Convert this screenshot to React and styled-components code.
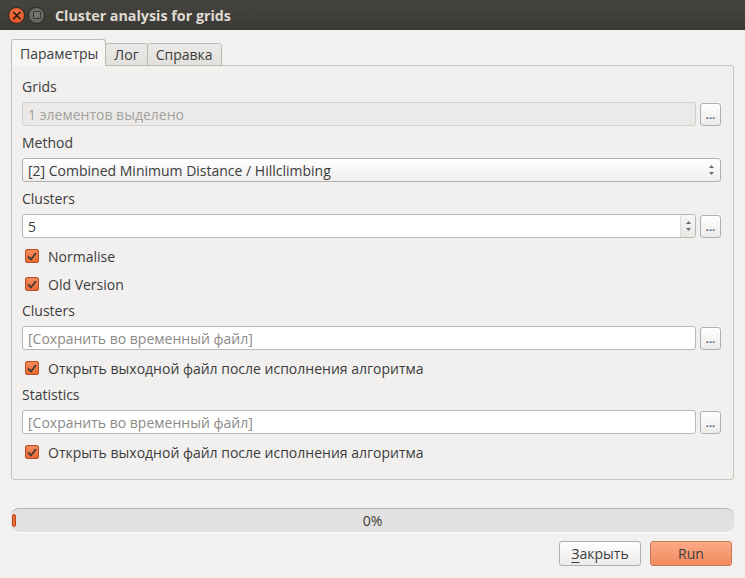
import styled, { createGlobalStyle } from 'styled-components';

const GlobalStyle = createGlobalStyle`
    html, body {
        margin: 0;
        padding: 0;
        background: #f2f1f0;
    }
    body {
        font-family: "Open Sans", "Noto Sans", "DejaVu Sans", sans-serif;
        font-size: 14px;
        color: #3c3c3c;
    }
`

const CheckIcon = () => (
    <svg width='10' height='9' viewBox='0 0 10 9'>
        <path d='M1 4.5 L4 7.5 L9 1' fill='none' stroke='#4a3a30' strokeWidth='1.8' />
    </svg>
)

const SpinArrows = () => (
    <svg width='7' height='14' viewBox='0 0 7 14'>
        <path d='M1 5 L3.5 2 L6 5 Z' fill='#6a6a6a' />
        <path d='M1 9 L3.5 12 L6 9 Z' fill='#6a6a6a' />
    </svg>
)

const FileRow = ({ placeholder, disabled }) => (
    <Row>
        <LineInput disabled={disabled}>{placeholder}</LineInput>
        <DotsButton>...</DotsButton>
    </Row>
)

const Check = ({ label }) => (
    <CheckRow>
        <CheckBox><CheckIcon /></CheckBox>
        <span>{label}</span>
    </CheckRow>
)

const App = () => {
    return (
        <Window>
            <GlobalStyle />
            <TitleBar>
                <CloseDot>×</CloseDot>
                <MaxDot><span /></MaxDot>
                <Title>Cluster analysis for grids</Title>
            </TitleBar>

            <Body>
                <Tabs>
                    <Tab active>Параметры</Tab>
                    <Tab>Лог</Tab>
                    <Tab>Справка</Tab>
                </Tabs>

                <Panel>
                    <Label>Grids</Label>
                    <FileRow placeholder='1 элементов выделено' disabled />

                    <Label>Method</Label>
                    <Combo>
                        <span>[2] Combined Minimum Distance / Hillclimbing</span>
                        <SpinArrows />
                    </Combo>

                    <Label>Clusters</Label>
                    <Row>
                        <SpinBox>
                            <span>5</span>
                            <SpinButtons><SpinArrows /></SpinButtons>
                        </SpinBox>
                        <DotsButton>...</DotsButton>
                    </Row>

                    <Check label='Normalise' />
                    <Check label='Old Version' />

                    <Label>Clusters</Label>
                    <FileRow placeholder='[Сохранить во временный файл]' />
                    <Check label='Открыть выходной файл после исполнения алгоритма' />

                    <Label>Statistics</Label>
                    <FileRow placeholder='[Сохранить во временный файл]' />
                    <Check label='Открыть выходной файл после исполнения алгоритма' />
                </Panel>

                <Progress>
                    <Chunk />
                    <span>0%</span>
                </Progress>

                <Buttons>
                    <PushButton><u>З</u>акрыть</PushButton>
                    <PushButton primary>Run</PushButton>
                </Buttons>
            </Body>
        </Window>
    )
}

export default App;

const Window = styled.div`
    width: 745px;
    height: 578px;
    background: #f2f1f0;
    overflow: hidden;
`

const TitleBar = styled.div`
    height: 30px;
    background: linear-gradient(#45443f, #3a3935);
    display: flex;
    align-items: center;
    padding-left: 8px;
    box-sizing: border-box;
`

const CloseDot = styled.div`
    width: 15px;
    height: 15px;
    border-radius: 50%;
    background: radial-gradient(circle at 50% 35%, #f47a50, #dd4814);
    border: 1px solid #2a2926;
    color: #3a1d10;
    font-size: 14px;
    font-weight: bold;
    line-height: 14px;
    text-align: center;
    font-family: "DejaVu Sans", sans-serif;
`

const MaxDot = styled.div`
    width: 15px;
    height: 15px;
    border-radius: 50%;
    background: radial-gradient(circle at 50% 35%, #7a7973, #5c5b56);
    border: 1px solid #2a2926;
    margin-left: 3px;
    display: flex;
    align-items: center;
    justify-content: center;

    span {
        width: 6px;
        height: 6px;
        border: 1.5px solid #3a3935;
        border-radius: 1px;
    }
`

const Title = styled.div`
    margin-left: 10px;
    font-weight: bold;
    font-size: 14.3px;
    color: #dfdbd2;
`

const Body = styled.div`
    padding: 9px 11px 0;
`

const Tabs = styled.div`
    display: flex;
    align-items: flex-end;
    height: 27px;
    margin-bottom: -1px;
    position: relative;
    z-index: 1;
`

const Tab = styled.div`
    height: ${p => p.active ? '27px' : '23px'};
    padding: ${p => p.active ? '1px 7px 0 8px' : '0 8px'};
    box-sizing: border-box;
    display: flex;
    align-items: center;
    border: 1px solid #bdbab6;
    border-bottom: ${p => p.active ? '1px solid #f7f6f5' : '1px solid #bdbab6'};
    border-radius: 3px 3px 0 0;
    background: ${p => p.active ? '#f7f6f5' : 'linear-gradient(#eceae8, #e2e0dd)'};
    margin-right: -1px;
    color: #3c3c3c;
`

const Panel = styled.div`
    height: 415px;
    box-sizing: border-box;
    border: 1px solid #c7c4c0;
    border-radius: 0 3px 3px 3px;
    background: #f1f0ef;
    padding: 4px 12px 0 10px;
    display: flex;
    flex-direction: column;
`

const Label = styled.div`
    height: 20px;
    line-height: 22px;
    margin-top: 6px;
`

const Row = styled.div`
    display: flex;
    align-items: center;
    gap: 4px;
    margin-top: 6px;
`

const LineInput = styled.div`
    flex: 1;
    height: 24px;
    box-sizing: border-box;
    border: 1px solid ${p => p.disabled ? '#d3d0cc' : '#bab7b3'};
    border-radius: 3px;
    background: ${p => p.disabled ? '#ebeae8' : '#ffffff'};
    color: ${p => p.disabled ? '#a3a19e' : '#8c8a87'};
    padding: 0 5px;
    display: flex;
    align-items: center;
`

const DotsButton = styled.div`
    width: 21px;
    height: 23px;
    box-sizing: border-box;
    border: 1px solid #b3b0ac;
    border-radius: 3px;
    background: linear-gradient(#ffffff, #ecebe9);
    color: #4a5a7a;
    font-size: 11px;
    font-weight: bold;
    display: flex;
    align-items: flex-end;
    justify-content: center;
    padding-bottom: 5px;
    line-height: 1;
`

const Combo = styled.div`
    height: 24px;
    margin-top: 6px;
    box-sizing: border-box;
    border: 1px solid #b3b0ac;
    border-radius: 3px;
    background: linear-gradient(#ffffff, #efeeed);
    display: flex;
    align-items: center;
    justify-content: space-between;
    padding: 0 5px 0 5px;
`

const SpinBox = styled.div`
    flex: 1;
    height: 24px;
    box-sizing: border-box;
    border: 1px solid #bab7b3;
    border-radius: 3px;
    background: #ffffff;
    display: flex;
    align-items: center;
    justify-content: space-between;
    padding-left: 5px;
    overflow: hidden;
`

const SpinButtons = styled.div`
    width: 14px;
    height: 100%;
    border-left: 1px solid #dedcd9;
    background: linear-gradient(#f7f7f6, #e8e7e5);
    display: flex;
    align-items: center;
    justify-content: center;
`

const CheckRow = styled.div`
    height: 20px;
    margin-top: 8px;
    display: flex;
    align-items: center;
    gap: 9px;
    padding-left: 3px;
`

const CheckBox = styled.div`
    width: 14px;
    height: 14px;
    box-sizing: border-box;
    border: 1px solid #b44d22;
    border-radius: 2px;
    background: linear-gradient(#f58a5c, #ea6a35);
    display: flex;
    align-items: center;
    justify-content: center;
`

const Progress = styled.div`
    margin-top: 28px;
    height: 25px;
    box-sizing: border-box;
    border-top: 1px solid #b5b3b0;
    border-bottom: 1px solid #fbfbfa;
    border-radius: 8px;
    background: #e2e1df;
    position: relative;
    display: flex;
    align-items: center;
    justify-content: center;
    color: #3c3c3c;
`

const Chunk = styled.div`
    position: absolute;
    left: 1px;
    top: 5px;
    width: 4px;
    height: 13px;
    box-sizing: border-box;
    border: 1px solid #b8461b;
    border-radius: 2px;
    background: #ef6b38;
`

const Buttons = styled.div`
    display: flex;
    justify-content: flex-end;
    gap: 9px;
    margin-top: 8px;
    padding-right: 2px;
`

const PushButton = styled.div`
    width: 82px;
    height: 25px;
    box-sizing: border-box;
    border: 1px solid ${p => p.primary ? '#c4785a' : '#b3b0ac'};
    border-radius: 3px;
    background: ${p => p.primary ? 'linear-gradient(#fba987, #f28a5f)' : 'linear-gradient(#ffffff, #ecebe9)'};
    display: flex;
    align-items: center;
    justify-content: center;
    color: #3c3c3c;

    u {
        text-decoration: underline;
        text-underline-offset: 3px;
    }
`
